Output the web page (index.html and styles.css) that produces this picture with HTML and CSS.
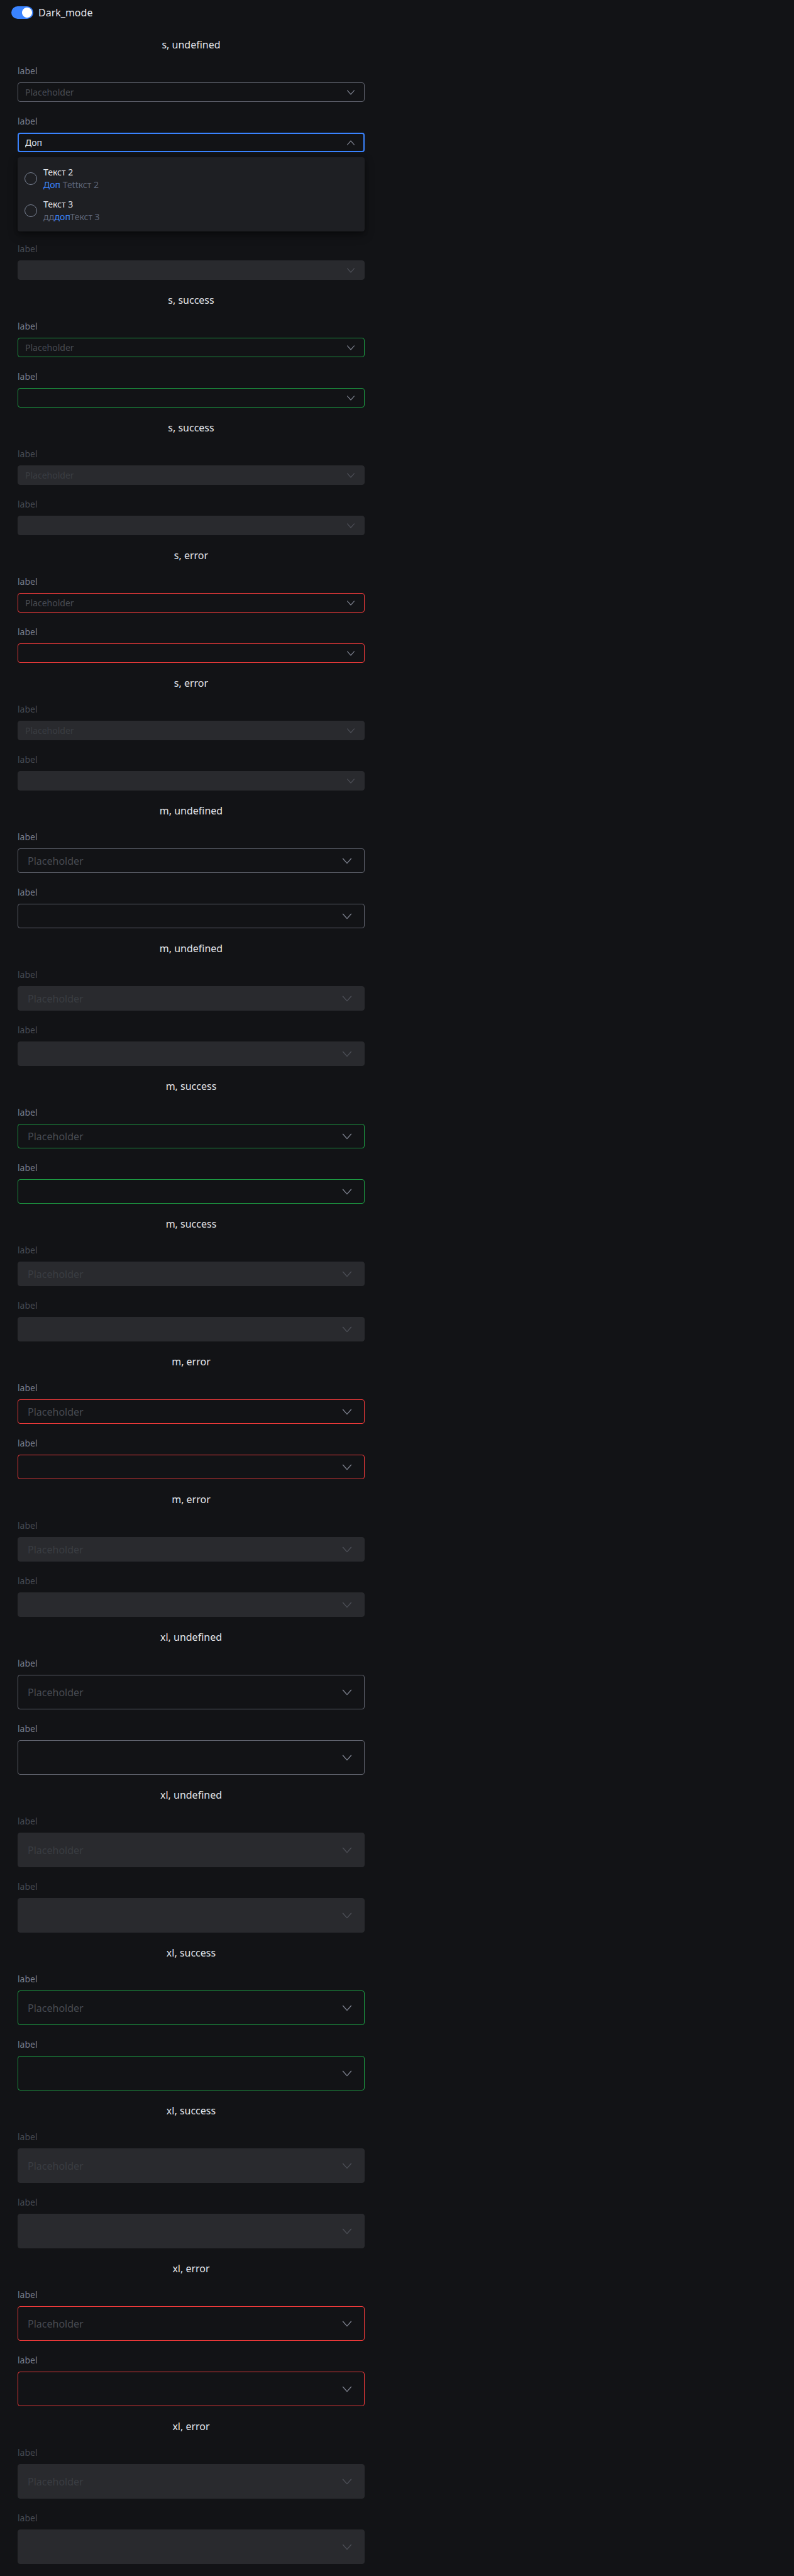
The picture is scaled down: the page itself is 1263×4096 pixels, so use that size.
FILE: index.html
```html
<!DOCTYPE html>
<html lang="ru">
<head>
<meta charset="utf-8">
<meta name="viewport" content="width=device-width, initial-scale=1">
<title>SearchSelect</title>
<link rel="stylesheet" href="styles.css">
</head>
<body>
<svg class="sprite" aria-hidden="true">
  <symbol id="down" viewBox="0 0 24 24"><path d="M5.5 8.3 12 15.6 18.5 8.3" fill="none" stroke="currentColor" stroke-width="1.4" stroke-linecap="round" stroke-linejoin="round"/></symbol>
  <symbol id="up" viewBox="0 0 24 24"><path d="M5.5 15.7 12 8.4 18.5 15.7" fill="none" stroke="currentColor" stroke-width="1.4" stroke-linecap="round" stroke-linejoin="round"/></symbol>
</svg>

<header class="toolbar">
  <label class="toggle"><input class="toggle-input" type="checkbox" role="switch" checked>Dark_mode</label>
</header>

<main class="stories">
  <section class="group">
    <h2 class="title">s, undefined</h2>
    <div class="field"><label class="label" for="f1">label</label><div class="select s"><input class="input" id="f1" placeholder="Placeholder"><svg class="icon"><use href="#down"/></svg></div></div>
    <div class="field">
      <label class="label" for="f2">label</label>
      <div class="select s open"><input class="input" id="f2" role="combobox" aria-expanded="true" aria-controls="menu" value="Доп"><svg class="icon"><use href="#up"/></svg></div>
      <div class="menu" id="menu">
        <label class="option"><input class="radio" type="radio" name="option"><span class="option-text"><span>Текст 2</span><span class="extra"><mark class="match">Доп</mark> Теttкст 2</span></span></label>
        <label class="option"><input class="radio" type="radio" name="option"><span class="option-text"><span>Текст 3</span><span class="extra">дд<mark class="match">доп</mark>Текст 3</span></span></label>
      </div>
    </div>
  </section>
  <section class="group disabled">
    <h2 class="title">s, undefined</h2>
    <div class="field"><label class="label" for="f3">label</label><div class="select s"><input class="input" id="f3" placeholder="Placeholder" disabled><svg class="icon"><use href="#down"/></svg></div></div>
    <div class="field"><label class="label" for="f4">label</label><div class="select s"><input class="input" id="f4" disabled><svg class="icon"><use href="#down"/></svg></div></div>
  </section>
  <section class="group success">
    <h2 class="title">s, success</h2>
    <div class="field"><label class="label" for="f5">label</label><div class="select s"><input class="input" id="f5" placeholder="Placeholder"><svg class="icon"><use href="#down"/></svg></div></div>
    <div class="field"><label class="label" for="f6">label</label><div class="select s"><input class="input" id="f6"><svg class="icon"><use href="#down"/></svg></div></div>
  </section>
  <section class="group disabled">
    <h2 class="title">s, success</h2>
    <div class="field"><label class="label" for="f7">label</label><div class="select s"><input class="input" id="f7" placeholder="Placeholder" disabled><svg class="icon"><use href="#down"/></svg></div></div>
    <div class="field"><label class="label" for="f8">label</label><div class="select s"><input class="input" id="f8" disabled><svg class="icon"><use href="#down"/></svg></div></div>
  </section>
  <section class="group error">
    <h2 class="title">s, error</h2>
    <div class="field"><label class="label" for="f9">label</label><div class="select s"><input class="input" id="f9" placeholder="Placeholder"><svg class="icon"><use href="#down"/></svg></div></div>
    <div class="field"><label class="label" for="f10">label</label><div class="select s"><input class="input" id="f10"><svg class="icon"><use href="#down"/></svg></div></div>
  </section>
  <section class="group disabled">
    <h2 class="title">s, error</h2>
    <div class="field"><label class="label" for="f11">label</label><div class="select s"><input class="input" id="f11" placeholder="Placeholder" disabled><svg class="icon"><use href="#down"/></svg></div></div>
    <div class="field"><label class="label" for="f12">label</label><div class="select s"><input class="input" id="f12" disabled><svg class="icon"><use href="#down"/></svg></div></div>
  </section>

  <section class="group">
    <h2 class="title">m, undefined</h2>
    <div class="field"><label class="label" for="f13">label</label><div class="select m"><input class="input" id="f13" placeholder="Placeholder"><svg class="icon"><use href="#down"/></svg></div></div>
    <div class="field"><label class="label" for="f14">label</label><div class="select m"><input class="input" id="f14"><svg class="icon"><use href="#down"/></svg></div></div>
  </section>
  <section class="group disabled">
    <h2 class="title">m, undefined</h2>
    <div class="field"><label class="label" for="f15">label</label><div class="select m"><input class="input" id="f15" placeholder="Placeholder" disabled><svg class="icon"><use href="#down"/></svg></div></div>
    <div class="field"><label class="label" for="f16">label</label><div class="select m"><input class="input" id="f16" disabled><svg class="icon"><use href="#down"/></svg></div></div>
  </section>
  <section class="group success">
    <h2 class="title">m, success</h2>
    <div class="field"><label class="label" for="f17">label</label><div class="select m"><input class="input" id="f17" placeholder="Placeholder"><svg class="icon"><use href="#down"/></svg></div></div>
    <div class="field"><label class="label" for="f18">label</label><div class="select m"><input class="input" id="f18"><svg class="icon"><use href="#down"/></svg></div></div>
  </section>
  <section class="group disabled">
    <h2 class="title">m, success</h2>
    <div class="field"><label class="label" for="f19">label</label><div class="select m"><input class="input" id="f19" placeholder="Placeholder" disabled><svg class="icon"><use href="#down"/></svg></div></div>
    <div class="field"><label class="label" for="f20">label</label><div class="select m"><input class="input" id="f20" disabled><svg class="icon"><use href="#down"/></svg></div></div>
  </section>
  <section class="group error">
    <h2 class="title">m, error</h2>
    <div class="field"><label class="label" for="f21">label</label><div class="select m"><input class="input" id="f21" placeholder="Placeholder"><svg class="icon"><use href="#down"/></svg></div></div>
    <div class="field"><label class="label" for="f22">label</label><div class="select m"><input class="input" id="f22"><svg class="icon"><use href="#down"/></svg></div></div>
  </section>
  <section class="group disabled">
    <h2 class="title">m, error</h2>
    <div class="field"><label class="label" for="f23">label</label><div class="select m"><input class="input" id="f23" placeholder="Placeholder" disabled><svg class="icon"><use href="#down"/></svg></div></div>
    <div class="field"><label class="label" for="f24">label</label><div class="select m"><input class="input" id="f24" disabled><svg class="icon"><use href="#down"/></svg></div></div>
  </section>

  <section class="group">
    <h2 class="title">xl, undefined</h2>
    <div class="field"><label class="label" for="f25">label</label><div class="select xl"><input class="input" id="f25" placeholder="Placeholder"><svg class="icon"><use href="#down"/></svg></div></div>
    <div class="field"><label class="label" for="f26">label</label><div class="select xl"><input class="input" id="f26"><svg class="icon"><use href="#down"/></svg></div></div>
  </section>
  <section class="group disabled">
    <h2 class="title">xl, undefined</h2>
    <div class="field"><label class="label" for="f27">label</label><div class="select xl"><input class="input" id="f27" placeholder="Placeholder" disabled><svg class="icon"><use href="#down"/></svg></div></div>
    <div class="field"><label class="label" for="f28">label</label><div class="select xl"><input class="input" id="f28" disabled><svg class="icon"><use href="#down"/></svg></div></div>
  </section>
  <section class="group success">
    <h2 class="title">xl, success</h2>
    <div class="field"><label class="label" for="f29">label</label><div class="select xl"><input class="input" id="f29" placeholder="Placeholder"><svg class="icon"><use href="#down"/></svg></div></div>
    <div class="field"><label class="label" for="f30">label</label><div class="select xl"><input class="input" id="f30"><svg class="icon"><use href="#down"/></svg></div></div>
  </section>
  <section class="group disabled">
    <h2 class="title">xl, success</h2>
    <div class="field"><label class="label" for="f31">label</label><div class="select xl"><input class="input" id="f31" placeholder="Placeholder" disabled><svg class="icon"><use href="#down"/></svg></div></div>
    <div class="field"><label class="label" for="f32">label</label><div class="select xl"><input class="input" id="f32" disabled><svg class="icon"><use href="#down"/></svg></div></div>
  </section>
  <section class="group error">
    <h2 class="title">xl, error</h2>
    <div class="field"><label class="label" for="f33">label</label><div class="select xl"><input class="input" id="f33" placeholder="Placeholder"><svg class="icon"><use href="#down"/></svg></div></div>
    <div class="field"><label class="label" for="f34">label</label><div class="select xl"><input class="input" id="f34"><svg class="icon"><use href="#down"/></svg></div></div>
  </section>
  <section class="group disabled">
    <h2 class="title">xl, error</h2>
    <div class="field"><label class="label" for="f35">label</label><div class="select xl"><input class="input" id="f35" placeholder="Placeholder" disabled><svg class="icon"><use href="#down"/></svg></div></div>
    <div class="field"><label class="label" for="f36">label</label><div class="select xl"><input class="input" id="f36" disabled><svg class="icon"><use href="#down"/></svg></div></div>
  </section>
</main>
</body>
</html>
```
FILE: styles.css
```css
:root {
  --bg: #121316;
  --surface: #1e1f23;
  --field-off: #292a2e;
  --text: #e2e4e9;
  --label: #7b7f8a;
  --label-off: #484b52;
  --placeholder: #484b52;
  --placeholder-off: #3a3d42;
  --border: #5f626d;
  --icon: #7d818e;
  --icon-off: #4d4f57;
  --primary: #3a83ff;
  --success: #1c9a42;
  --error: #f03a3a;
}

* { box-sizing: border-box; }

body {
  margin: 0;
  background: var(--bg);
  color: var(--text);
  font: 16px/24px "Noto Sans", sans-serif;
}

.sprite { display: none; }

.toolbar {
  display: flex;
  padding: 8px 18px;
}

.toggle {
  display: flex;
  align-items: center;
  gap: 8px;
}

.toggle-input {
  appearance: none;
  width: 35px;
  height: 20px;
  margin: 0;
  border-radius: 10px;
  background: radial-gradient(circle closest-side at 25px 10px, #fff 75%, transparent 84%) var(--primary);
}

.stories {
  display: flex;
  flex-direction: column;
  gap: 20px;
  max-width: 608px;
  padding: 19px 28px;
}

.group {
  display: flex;
  flex-direction: column;
  gap: 21px;
}

.title {
  margin: 0 0 -1px;
  font-size: 16px;
  font-weight: 400;
  line-height: 24px;
  text-align: center;
}

.field {
  position: relative;
  display: flex;
  flex-direction: column;
  gap: 8px;
}

.label {
  color: var(--label);
  font-size: 14px;
  line-height: 20px;
}

.select {
  display: flex;
  align-items: center;
  border: 1px solid var(--border);
  border-radius: 4px;
}

.s { height: 31px; padding: 0 11px; font-size: 14px; }
.m { height: 39px; padding: 0 15px; }
.xl { height: 55px; padding: 0 15px; }

.input {
  flex: 1;
  min-width: 0;
  height: 24px;
  padding: 0;
  border: 0;
  outline: 0;
  background: none;
  color: var(--text);
  font: inherit;
}

.input::placeholder { color: var(--placeholder); opacity: 1; }

.icon {
  flex: none;
  width: 24px;
  height: 24px;
  color: var(--icon);
}

.s .icon { width: 20px; height: 20px; }

.success .select { border-color: var(--success); }
.error .select { border-color: var(--error); }

.open {
  border: 2px solid var(--primary);
  padding: 0 10px;
}

.disabled .label { color: var(--label-off); }
.disabled .select { border-color: var(--field-off); background: var(--field-off); }
.disabled .input::placeholder { color: var(--placeholder-off); }
.disabled .icon { color: var(--icon-off); }

.menu {
  position: absolute;
  z-index: 1;
  top: 100%;
  left: 0;
  right: 0;
  margin-top: 8px;
  padding: 8px 0;
  border-radius: 4px;
  background: var(--surface);
  box-shadow: 0 6px 16px rgb(0 0 0 / 32%), 0 2px 6px rgb(0 0 0 / 30%);
  font-size: 14px;
  line-height: 20px;
}

.option {
  display: flex;
  align-items: center;
  gap: 10px;
  height: 51px;
  padding: 0 11px;
}

.radio {
  appearance: none;
  width: 20px;
  height: 20px;
  margin: 0;
  border: 1px solid #7b8496;
  border-radius: 50%;
}

.option-text { display: flex; flex-direction: column; }
.extra { color: #5f6678; }
.match { background: none; color: var(--primary); }
```
